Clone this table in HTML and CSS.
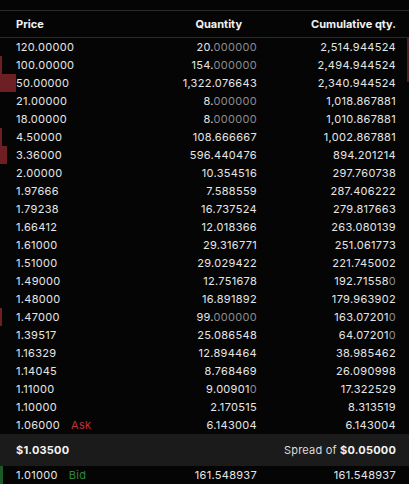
FILE: index.html
```html
<!DOCTYPE html>
<html>
<head>
<meta charset="utf-8">
<link rel="stylesheet" href="styles.css">
</head>
<body>
<div class="book">
  <div class="row head">
    <div>Price</div>
    <div class="r qh">Quantity</div>
    <div class="r">Cumulative qty.</div>
  </div>
  <div class="rows">
    <div class="row"><span class="rbar" style="width:2px"></span><div>120.00000</div><div class="r">20.<i>000000</i></div><div class="r">2,514.944524</div></div>
    <div class="row"><span class="bar" style="width:2px"></span><span class="rbar" style="width:2px"></span><div>100.00000</div><div class="r">154.<i>000000</i></div><div class="r">2,494.944524</div></div>
    <div class="row"><span class="bar" style="width:16px"></span><span class="rbar part" style="width:2px"></span><div>50.00000</div><div class="r">1,322.076643</div><div class="r">2,340.944524</div></div>
    <div class="row"><div>21.00000</div><div class="r">8.<i>000000</i></div><div class="r">1,018.867881</div></div>
    <div class="row"><div>18.00000</div><div class="r">8.<i>000000</i></div><div class="r">1,010.867881</div></div>
    <div class="row"><span class="bar" style="width:2px"></span><div>4.50000</div><div class="r">108.666667</div><div class="r">1,002.867881</div></div>
    <div class="row"><span class="bar" style="width:7px"></span><div>3.36000</div><div class="r">596.440476</div><div class="r">894.201214</div></div>
    <div class="row"><div>2.00000</div><div class="r">10.354516</div><div class="r">297.760738</div></div>
    <div class="row"><div>1.97666</div><div class="r">7.588559</div><div class="r">287.406222</div></div>
    <div class="row"><div>1.79238</div><div class="r">16.737524</div><div class="r">279.817663</div></div>
    <div class="row"><div>1.66412</div><div class="r">12.018366</div><div class="r">263.080139</div></div>
    <div class="row"><div>1.61000</div><div class="r">29.316771</div><div class="r">251.061773</div></div>
    <div class="row"><div>1.51000</div><div class="r">29.029422</div><div class="r">221.745002</div></div>
    <div class="row"><div>1.49000</div><div class="r">12.751678</div><div class="r">192.71558<i>0</i></div></div>
    <div class="row"><div>1.48000</div><div class="r">16.891892</div><div class="r">179.963902</div></div>
    <div class="row"><span class="bar" style="width:2px"></span><div>1.47000</div><div class="r">99.<i>000000</i></div><div class="r">163.07201<i>0</i></div></div>
    <div class="row"><div>1.39517</div><div class="r">25.086548</div><div class="r">64.07201<i>0</i></div></div>
    <div class="row"><div>1.16329</div><div class="r">12.894464</div><div class="r">38.985462</div></div>
    <div class="row"><div>1.14045</div><div class="r">8.768469</div><div class="r">26.090998</div></div>
    <div class="row"><div>1.11000</div><div class="r">9.00901<i>0</i></div><div class="r">17.322529</div></div>
    <div class="row"><div>1.10000</div><div class="r">2.170515</div><div class="r">8.313519</div></div>
    <div class="row"><div>1.06000<span class="ask">Ask</span></div><div class="r">6.143004</div><div class="r">6.143004</div></div>
  </div>
  <div class="spread">
    <b>$1.03500</b>
    <span class="sp">Spread of <b>$0.05000</b></span>
  </div>
  <div class="row"><span class="bar green" style="width:3px"></span><div>1.01000<span class="bid">Bid</span></div><div class="r">161.548937</div><div class="r">161.548937</div></div>
</div>
</body>
</html>
```

FILE: styles.css
```css
html, body {
  margin: 0;
  padding: 0;
  background: #050505;
}
body {
  font-family: Inter, "Noto Sans", "Liberation Sans", sans-serif;
  font-size: 11px;
  color: #e6e6e6;
  width: 409px;
  height: 484px;
  overflow: hidden;
}
.book {
  padding-top: 10px;
}
.row {
  position: relative;
  display: grid;
  grid-template-columns: 1fr 115px 139px;
  align-items: center;
  height: 18px;
  padding: 0 13px 0 16px;
  letter-spacing: 0.3px;
}
.row > div {
  position: relative;
  white-space: nowrap;
}
.head {
  height: 26px;
  border-top: 1px solid #2b2b2b;
  border-bottom: 1px solid #2b2b2b;
  font-weight: 700;
  color: #f2f2f2;
  letter-spacing: 0;
}
.qh {
  padding-right: 15px;
}
.r {
  text-align: right;
}
i {
  font-style: normal;
  color: #8c8c8c;
}
.bar {
  position: absolute;
  left: 0;
  top: 0;
  bottom: 0;
  background: #6e1f24;
}
.bar.green {
  background: #1d5a2a;
}
.rbar {
  position: absolute;
  right: 0;
  top: 0;
  bottom: 0;
  background: #4a1e22;
}
.rbar.part {
  bottom: 10px;
}
.ask {
  color: #c2323c;
  margin-left: 11px;
}
.bid {
  color: #2e8a3c;
  margin-left: 11px;
}
.spread {
  display: flex;
  justify-content: space-between;
  align-items: center;
  height: 32px;
  padding: 0 13px 0 16px;
  background: #1b1b1b;
  color: #dcdcdc;
  letter-spacing: 0.2px;
}
.spread b {
  font-weight: 700;
  color: #f4f4f4;
}
```
